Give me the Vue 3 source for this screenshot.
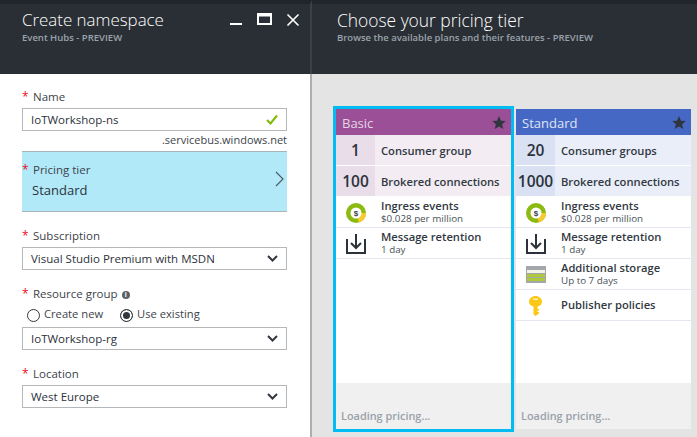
<script setup>
const basicRows = [
  { num: '1', label: 'Consumer group' },
  { num: '100', label: 'Brokered connections' },
];
const standardRows = [
  { num: '20', label: 'Consumer groups' },
  { num: '1000', label: 'Brokered connections' },
];
const basicFeatures = [
  { icon: 'coin', title: 'Ingress events', sub: '$0.028 per million' },
  { icon: 'download', title: 'Message retention', sub: '1 day' },
];
const standardFeatures = [
  ...basicFeatures,
  { icon: 'storage', title: 'Additional storage', sub: 'Up to 7 days' },
  { icon: 'key', title: 'Publisher policies', sub: '' },
];
const tiers = [
  { name: 'Basic', cls: 'basic', rows: basicRows, features: basicFeatures, selected: true },
  { name: 'Standard', cls: 'standard', rows: standardRows, features: standardFeatures, selected: false },
];
</script>

<template>
  <div class="page">
    <section class="blade left">
      <header class="head">
        <div class="titles">
          <h1>Create namespace</h1>
          <p>Event Hubs - PREVIEW</p>
        </div>
        <div class="controls">
          <svg width="14" height="14" viewBox="0 0 14 14"><rect x="1" y="10" width="12" height="2" fill="#fff" /></svg>
          <svg width="15" height="14" viewBox="0 0 15 14"><path d="M1 1h13v10H1z M1 2.500h13" fill="none" stroke="#fff" stroke-width="2" /></svg>
          <svg width="14" height="14" viewBox="0 0 14 14"><path d="M1.500 1.500l11 11M12.500 1.500l-11 11" fill="none" stroke="#fff" stroke-width="1.600" /></svg>
        </div>
      </header>
      <div class="form">
        <label class="lbl first"><span class="req">*</span>Name</label>
        <div class="input">
          <span>IoTWorkshop-ns</span>
          <svg width="12" height="11" viewBox="0 0 12 11"><path d="M1 6l3.500 3.500L11 1.500" fill="none" stroke="#7fba00" stroke-width="2" /></svg>
        </div>
        <div class="suffix">.servicebus.windows.net</div>
        <div class="picker">
          <div class="picker-text">
            <label class="lbl inner"><span class="req">*</span>Pricing tier</label>
            <div class="picked">Standard</div>
          </div>
          <svg class="chev" width="10" height="16" viewBox="0 0 10 16"><path d="M1 1l7 7-7 7" fill="none" stroke="#4a5560" stroke-width="1.100" /></svg>
        </div>
        <label class="lbl sub"><span class="req">*</span>Subscription</label>
        <div class="input select">
          <span>Visual Studio Premium with MSDN</span>
          <svg width="11" height="7" viewBox="0 0 11 7"><path d="M1 1l4.500 4.500L10 1" fill="none" stroke="#32383f" stroke-width="2" /></svg>
        </div>
        <label class="lbl group"><span class="req">*</span>Resource group<i class="info">i</i></label>
        <div class="radios">
          <span class="radio"><i class="dot"></i>Create new</span>
          <span class="radio on"><i class="dot"></i>Use existing</span>
        </div>
        <div class="input select">
          <span>IoTWorkshop-rg</span>
          <svg width="11" height="7" viewBox="0 0 11 7"><path d="M1 1l4.500 4.500L10 1" fill="none" stroke="#32383f" stroke-width="2" /></svg>
        </div>
        <label class="lbl loc"><span class="req">*</span>Location</label>
        <div class="input select">
          <span>West Europe</span>
          <svg width="11" height="7" viewBox="0 0 11 7"><path d="M1 1l4.500 4.500L10 1" fill="none" stroke="#32383f" stroke-width="2" /></svg>
        </div>
      </div>
    </section>

    <section class="blade right">
      <header class="head">
        <div class="titles">
          <h1>Choose your pricing tier</h1>
          <p>Browse the available plans and their features - PREVIEW</p>
        </div>
      </header>
      <div class="tiers">
        <div v-for="tier in tiers" :key="tier.name" class="frame" :class="{ selected: tier.selected }">
          <article class="card" :class="tier.cls">
            <div class="card-head">
              <span>{{ tier.name }}</span>
              <svg width="14" height="13" viewBox="0 0 24 23"><path d="M12 0l3.500 8.200 8.500.7-6.500 5.700 2 8.400L12 18.500 4.500 23l2-8.400L0 8.900l8.500-.7z" fill="#2f3640" /></svg>
            </div>
            <div v-for="row in tier.rows" :key="row.label" class="quota">
              <div class="num">{{ row.num }}</div>
              <div class="quota-label">{{ row.label }}</div>
            </div>
            <div v-for="f in tier.features" :key="f.title" class="feature">
              <div class="ficon">
                <svg v-if="f.icon === 'coin'" width="20" height="20" viewBox="0 0 20 20">
                  <circle cx="10" cy="10" r="10" fill="#8cba12" />
                  <path d="M10 10L20 10A10 10 0 0 1 13 19.500z" fill="#f6c92c" />
                  <circle cx="10" cy="10" r="5.500" fill="#fff" />
                  <text x="10" y="13" text-anchor="middle" font-size="8" font-weight="700" font-family="Liberation Sans, sans-serif" fill="#39414a">$</text>
                </svg>
                <svg v-else-if="f.icon === 'download'" width="20" height="20" viewBox="0 0 20 20">
                  <path d="M1 5v14h18V5" fill="none" stroke="#2c323a" stroke-width="2" />
                  <path d="M10 0v14M5 9l5 5 5-5" fill="none" stroke="#2c323a" stroke-width="2" />
                </svg>
                <svg v-else-if="f.icon === 'storage'" width="20" height="17" viewBox="0 0 20 17">
                  <rect width="20" height="17" fill="#a3a7aa" />
                  <rect x="1" y="4" width="18" height="3" fill="#f3f3ea" />
                  <rect x="1" y="8" width="18" height="3" fill="#aec93c" />
                  <rect x="1" y="12" width="18" height="3" fill="#aec93c" />
                </svg>
                <svg v-else width="13" height="20" viewBox="0 0 13 20">
                  <path d="M6.500 0C10 0 13 2.500 13 5.500c0 2.500-1.500 4.200-4.500 5V13H10v1.500H8.500V16H10v1.500L6.500 20 4.500 18.500v-8C1.500 9.700 0 8 0 5.500 0 2.500 3 0 6.500 0z" fill="#fbc816" />
                  <rect x="4" y="2.500" width="5" height="1.500" fill="#fff3b0" />
                </svg>
              </div>
              <div class="ftext">
                <div class="ftitle">{{ f.title }}</div>
                <div v-if="f.sub" class="fsub">{{ f.sub }}</div>
              </div>
            </div>
            <div class="fill"></div>
            <footer class="card-foot">Loading pricing...</footer>
          </article>
        </div>
      </div>
    </section>
  </div>
</template>

<style>
html, body { margin: 0; background: #e4e4e4; }
</style>

<style scoped>
.page {
  width: 697px;
  height: 437px;
  display: flex;
  overflow: hidden;
  font-family: "Open Sans", "Noto Sans", sans-serif;
  color: #32383f;
}
.blade { display: flex; flex-direction: column; height: 100%; }
.left { width: 312px; background: #fff; flex: none; }
.right { flex: 1; background: #e4e4e4; min-width: 0; }
.head {
  height: 70px;
  flex: none;
  background: #2a2f35;
  border-top: 4px solid #20252a;
  display: flex;
  justify-content: space-between;
  align-items: flex-start;
}
.left .head { padding-left: 22px; padding-right: 10px; border-right: 2px solid #3c4147; }
.right .head { padding-left: 25px; }
.titles { padding-top: 4px; }
h1 {
  margin: 0;
  font-weight: 300;
  font-size: 17.4px;
  line-height: 24px;
  color: #fff;
}
.left h1 { font-size: 16.9px; }
.titles p {
  margin: 0;
  font-size: 9.5px;
  font-weight: 600;
  line-height: 12px;
  color: #9aa3ac;
}
.controls { display: flex; gap: 14px; padding-top: 9px; }
.form {
  padding: 0 23px 0 22px;
  flex: 1;
  border-right: 2px solid #aeaeae;
}
.lbl {
  display: block;
  font-size: 11.5px;
  line-height: 16px;
  color: #3c434a;
}
.req { color: #e81123; display: inline-block; width: 11px; font-size: 12px; }
.first { margin-top: 15px; margin-bottom: 3px; }
.input {
  box-sizing: border-box;
  height: 23px;
  border: 1px solid #b4b8bb;
  padding: 0 8px;
  display: flex;
  align-items: center;
  justify-content: space-between;
  font-size: 11.5px;
  color: #2c323a;
}
.suffix { font-size: 11px; line-height: 18px; text-align: right; height: 20px; color: #3c434a; }
.picker {
  box-sizing: border-box;
  height: 61px;
  background: #b1e9f9;
  border-top: 1px solid #a9b4b8;
  border-bottom: 1px solid #a9b4b8;
  display: flex;
  align-items: center;
  justify-content: space-between;
  padding-right: 2px;
  margin-bottom: 16px;
}
.picker-text { padding-bottom: 2px; }
.chev { margin-bottom: 5px; }
.inner { margin-bottom: 3px; }
.picked { font-size: 13px; line-height: 18px; padding-left: 10px; color: #2c323a; }
.sub { margin-bottom: 3px; }
.group { margin-top: 16px; }
.info {
  display: inline-block;
  width: 8px;
  height: 8px;
  border-radius: 50%;
  background: #5a6168;
  color: #fff;
  font: 700 7px/8px "Liberation Sans", sans-serif;
  text-align: center;
  margin-left: 4px;
  vertical-align: 1px;
}
.radios { display: flex; padding-left: 5px; margin: 5px 0 3px; height: 17px; font-size: 11.2px; line-height: 14px; }
.radio { display: flex; gap: 4px; color: #3c434a; }
.radio:first-child { width: 93px; }
.dot {
  box-sizing: border-box;
  width: 13px;
  height: 13px;
  margin-top: 2px;
  border: 1px solid #32383f;
  border-radius: 50%;
  background: #fff;
}
.on .dot { background: #32383f; box-shadow: inset 0 0 0 2px #fff; }
.loc { margin-top: 16px; margin-bottom: 3px; }

.tiers { display: flex; padding: 32px 0 0 21px; gap: 2px; }
.frame { border: 3px solid transparent; }
.frame.selected { border-color: #00bcf2; }
.frame:not(.selected) { margin-left: -3px; }
.card {
  width: 175px;
  height: 320px;
  background: #fff;
  display: flex;
  flex-direction: column;
}
.card-head {
  box-sizing: border-box;
  height: 26px;
  flex: none;
  padding: 1px 5px 0 6px;
  display: flex;
  align-items: center;
  justify-content: space-between;
  font-size: 13px;
  color: #e3d6e6;
}
.basic .card-head { background: #9b4f96; }
.standard .card-head { background: #4668c5; color: #dfe5f5; }
.quota { height: 30px; margin-bottom: 1px; display: flex; flex: none; }
.basic .quota { background: #f3ecf3; }
.standard .quota { background: #e9eef8; }
.num {
  width: 39px;
  flex: none;
  display: flex;
  align-items: center;
  justify-content: center;
  font-size: 15.5px;
  font-weight: 600;
  color: #2c323a;
}
.basic .num { background: #e9dde9; }
.standard .num { background: #d9e1f3; }
.quota-label {
  padding: 1px 0 0 6px;
  display: flex;
  align-items: center;
  font-size: 11.2px;
  font-weight: 600;
  color: #32383f;
}
.feature {
  height: 31px;
  box-sizing: border-box;
  flex: none;
  border-bottom: 1px solid #e6e6f0;
  display: flex;
  align-items: center;
}
.ficon { width: 39px; flex: none; display: flex; justify-content: center; padding-top: 1px; }
.ftext { padding-left: 6px; }
.ftitle { font-size: 11.2px; font-weight: 600; line-height: 14px; color: #32383f; }
.fsub { font-size: 9.8px; line-height: 12px; color: #4a5158; }
.fill { flex: 1; }
.card-foot {
  height: 46px;
  box-sizing: border-box;
  flex: none;
  background: #f0f0f0;
  padding: 26px 0 0 5px;
  font-size: 10.9px;
  font-weight: 600;
  line-height: 13px;
  color: #9aa0aa;
}
</style>
